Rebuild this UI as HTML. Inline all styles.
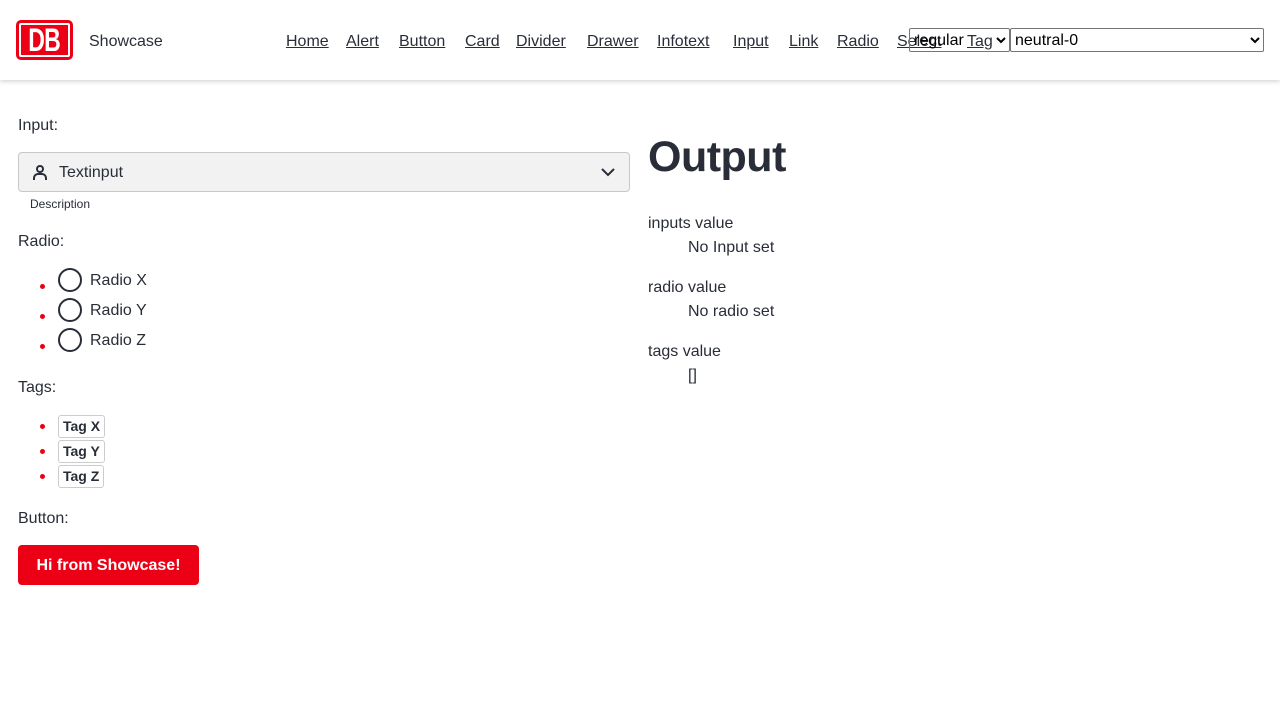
<!DOCTYPE html>
<html><head><meta charset="utf-8"><style>
*{box-sizing:border-box}
body{margin:0;width:1280px;height:720px;overflow:hidden;background:#fff;font-family:"Liberation Sans",sans-serif;color:#282d37;font-size:16px}
header{position:absolute;left:0;top:0;width:1280px;height:80px;background:#fff;box-shadow:0 2px 4px rgba(0,0,0,.15)}
.logo{position:absolute;left:16px;top:20px;width:57px;height:40px;background:#ec0016;border-radius:5px;padding:3px}
.logo div{width:100%;height:100%;background:#fff;border-radius:2px;padding:2px}
.logo span{display:block;width:100%;height:100%;background:#ec0016;color:#fff;font-weight:bold;font-size:32px;line-height:30px;text-align:center;letter-spacing:-1px;overflow:hidden}
.logo span i{display:inline-block;font-style:normal;transform:scaleX(.72)}
.sc{position:absolute;left:89px;top:33px;font-size:16px}
nav a{position:absolute;top:33px;color:#282d37;text-decoration:underline;white-space:nowrap}
select{position:absolute;top:28px;height:24px;font-size:16px;font-family:"Liberation Sans",sans-serif;background:#fff;border:1px solid #767676;border-radius:2px;color:#000}
.lbl{position:absolute;left:18px;font-size:16px}
.inp{position:absolute;left:18px;top:152px;width:612px;height:40px;background:#f2f2f2;border:1px solid #c8c8c8;border-radius:4px}
.dot{position:absolute;left:40px;width:5px;height:5px;border-radius:50%;background:#ec0016}
.rad{position:absolute;left:58px;width:24px;height:24px;border:2px solid #282d37;border-radius:50%}
.rt{position:absolute;left:90px;font-size:16px}
.tag{position:absolute;left:58px;height:23px;border:1px solid #ccc;border-radius:3px;font-weight:bold;font-size:14px;line-height:21px;padding:0 4px}
.btn{position:absolute;left:18px;top:545px;width:181px;height:40px;background:#ec0016;color:#fff;font-weight:bold;font-size:16px;line-height:42px;text-align:center;border-radius:4px}
h1{position:absolute;left:648px;top:133px;margin:0;font-size:43px;font-weight:900;line-height:48px;color:#282d37;letter-spacing:-.5px}
.o{position:absolute;font-size:16px}
</style></head><body>
<header>
<div class="logo"><div><span><i>DB</i></span></div></div>
<div class="sc">Showcase</div>
<nav><a style="left:286px">Home</a><a style="left:346px">Alert</a><a style="left:399px">Button</a><a style="left:465px">Card</a><a style="left:516px">Divider</a><a style="left:587px">Drawer</a><a style="left:657px">Infotext</a><a style="left:733px">Input</a><a style="left:789px">Link</a><a style="left:837px">Radio</a><a style="left:897px">Select</a><a style="left:967px">Tag</a></nav>
<select style="left:909px;width:101px;background:transparent"><option>regular</option></select>
<select style="left:1010px;width:254px"><option>neutral-0</option></select>
</header>
<div class="lbl" style="top:117px">Input:</div>
<div class="inp">
<svg style="position:absolute;left:13px;top:11px" width="16" height="17" viewBox="0 0 16 17" fill="none" stroke="#282d37" stroke-width="2"><circle cx="8" cy="5" r="3"/><path d="M2 16v-2a4 4 0 0 1 4-4h4a4 4 0 0 1 4 4v2"/></svg>
<span style="position:absolute;left:40px;top:11px;font-size:16px">Textinput</span>
<svg style="position:absolute;right:14px;top:14px" width="14" height="10" viewBox="0 0 14 10" fill="none" stroke="#282d37" stroke-width="2"><path d="M1 2l6 6 6-6"/></svg>
</div>
<div style="position:absolute;left:30px;top:197px;font-size:12px">Description</div>
<div class="lbl" style="top:233px">Radio:</div>
<div class="dot" style="top:284px"></div><div class="rad" style="top:268px"></div><div class="rt" style="top:272px">Radio X</div>
<div class="dot" style="top:314px"></div><div class="rad" style="top:298px"></div><div class="rt" style="top:302px">Radio Y</div>
<div class="dot" style="top:344px"></div><div class="rad" style="top:328px"></div><div class="rt" style="top:332px">Radio Z</div>
<div class="lbl" style="top:379px">Tags:</div>
<div class="dot" style="top:424px"></div><div class="tag" style="top:415px">Tag X</div>
<div class="dot" style="top:449px"></div><div class="tag" style="top:440px">Tag Y</div>
<div class="dot" style="top:474px"></div><div class="tag" style="top:465px">Tag Z</div>
<div class="lbl" style="top:510px">Button:</div>
<div class="btn">Hi from Showcase!</div>
<h1>Output</h1>
<div class="o" style="left:648px;top:215px">inputs value</div>
<div class="o" style="left:688px;top:239px">No Input set</div>
<div class="o" style="left:648px;top:279px">radio value</div>
<div class="o" style="left:688px;top:303px">No radio set</div>
<div class="o" style="left:648px;top:343px">tags value</div>
<div class="o" style="left:688px;top:367px">[]</div>
</body></html>
